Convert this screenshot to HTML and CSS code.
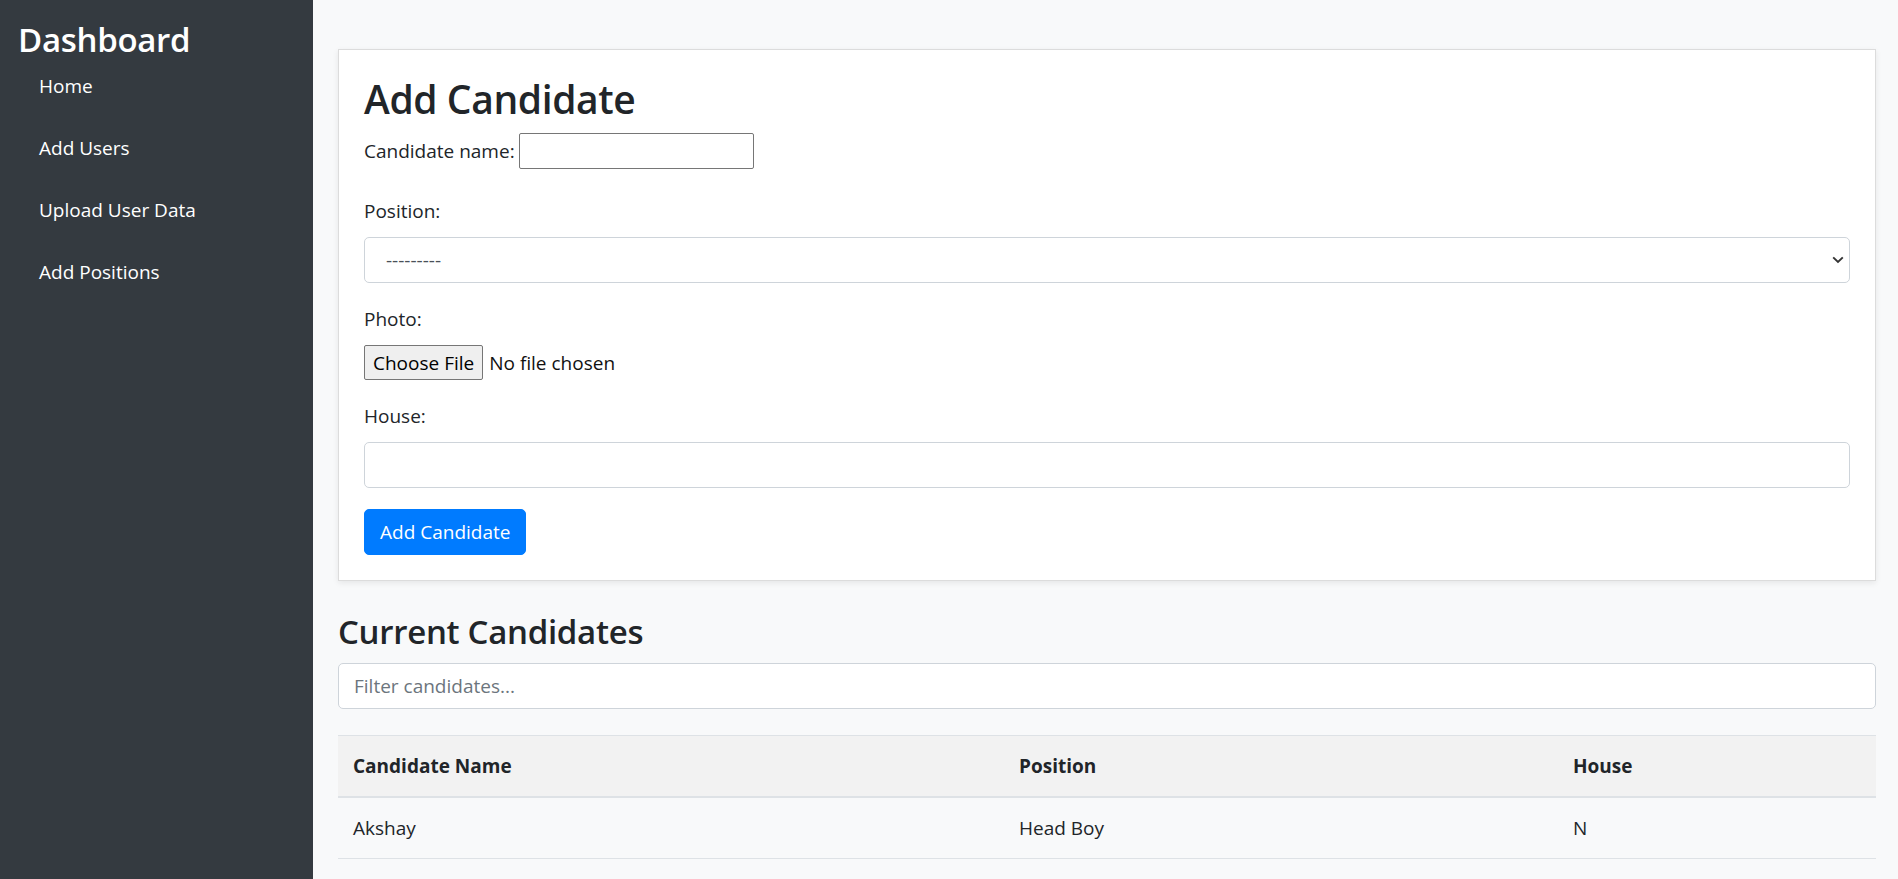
FILE: index.html
```html
<!DOCTYPE html>
<html lang="en">
<head>
<meta charset="utf-8">
<title>Dashboard - Add Candidate</title>
<link rel="stylesheet" href="styles.css">
</head>
<body>
<div class="layout">
  <aside class="sidebar">
    <h2 class="brand">Dashboard</h2>
    <ul class="nav">
      <li><a href="#">Home</a></li>
      <li><a href="#">Add Users</a></li>
      <li><a href="#">Upload User Data</a></li>
      <li><a href="#">Add Positions</a></li>
    </ul>
  </aside>
  <main class="main">
    <section class="card">
      <h1 class="card-title">Add Candidate</h1>
      <form class="form">
        <div class="row-inline">
          <label for="name">Candidate name:</label>
          <input id="name" class="plain-input" type="text">
        </div>
        <label class="field-label" for="position">Position:</label>
        <div class="select-wrap">
          <select id="position" class="control select">
            <option>---------</option>
          </select>
          <svg class="chevron" width="12" height="8" viewBox="0 0 12 8"><path d="M1.2 1.4 L6 6 L10.8 1.4" fill="none" stroke="#333" stroke-width="1.9"/></svg>
        </div>
        <label class="field-label" for="photo">Photo:</label>
        <div class="file-row">
          <button type="button" class="file-btn" id="photo">Choose File</button>
          <span class="file-name">No file chosen</span>
        </div>
        <label class="field-label" for="house">House:</label>
        <input id="house" class="control house" type="text">
        <button type="button" class="btn-primary">Add Candidate</button>
      </form>
    </section>
    <h2 class="section-title">Current Candidates</h2>
    <input class="control filter" type="text" placeholder="Filter candidates...">
    <table class="table">
      <thead>
        <tr>
          <th class="col-name">Candidate Name</th>
          <th class="col-pos">Position</th>
          <th class="col-house">House</th>
        </tr>
      </thead>
      <tbody>
        <tr>
          <td>Akshay</td>
          <td>Head Boy</td>
          <td>N</td>
        </tr>
      </tbody>
    </table>
  </main>
</div>
</body>
</html>
```
FILE: styles.css
```css
* { box-sizing: border-box; }
html, body { margin: 0; padding: 0; }
body {
  font-family: "Open Sans", "Noto Sans", sans-serif;
  font-size: 19px;
  line-height: 30px;
  color: #212529;
  background: #f8f9fa;
}
.layout {
  display: flex;
  min-height: 879px;
}
.sidebar {
  width: 313px;
  flex: 0 0 313px;
  background: #343a40;
  color: #fff;
  padding: 20px 0 0 18px;
}
.brand {
  margin: 0;
  font-size: 33px;
  line-height: 40px;
  font-weight: 600;
  letter-spacing: -0.3px;
}
.nav {
  list-style: none;
  margin: 0;
  padding: 0;
}
.nav li a {
  display: block;
  color: #fff;
  text-decoration: none;
  padding: 11px 0 21px 21px;
  line-height: 30px;
  font-size: 19px;
}
.main {
  flex: 1;
  padding: 49px 22px 0 25px;
}
.card {
  background: #fff;
  border: 1px solid #dcdcdc;
  box-shadow: 0 2px 6px rgba(0,0,0,0.08);
  padding: 25px;
}
.card-title {
  margin: 0 0 10px;
  font-size: 39px;
  line-height: 48px;
  font-weight: 600;
  letter-spacing: -0.4px;
}
.form {
  display: flex;
  flex-direction: column;
  align-items: flex-start;
}
.row-inline {
  display: flex;
  align-items: center;
  gap: 4px;
  height: 36px;
  margin-bottom: 27px;
}
.plain-input {
  width: 235px;
  height: 36px;
  border: 1px solid #767676;
  border-radius: 2px;
  font: inherit;
  padding: 0 4px;
}
.field-label {
  display: block;
  margin-bottom: 11px;
}
.control {
  width: 100%;
  height: 46px;
  border: 1px solid #ced4da;
  border-radius: 5px;
  background: #fff;
  font: inherit;
  color: #495057;
  padding: 0 15px;
}
.select-wrap {
  position: relative;
  width: 100%;
  margin-bottom: 21px;
}
.select {
  appearance: none;
  -webkit-appearance: none;
  padding-left: 21px;
  display: block;
}
.chevron {
  position: absolute;
  right: 6px;
  top: 19px;
}
.file-row {
  display: flex;
  align-items: center;
  gap: 6px;
  height: 35px;
  margin-bottom: 21px;
}
.file-btn {
  height: 35px;
  padding: 0 8px;
  background: #efefef;
  border: 1px solid #767676;
  border-radius: 2px;
  font: inherit;
  color: #000;
}
.file-name { color: #111; }
.house { margin-bottom: 21px; }
.btn-primary {
  height: 46px;
  padding: 0 15px;
  background: #007bff;
  color: #fff;
  border: 1px solid #007bff;
  border-radius: 5px;
  font: inherit;
}
.section-title {
  margin: 30px 0 10px;
  font-size: 33px;
  line-height: 42px;
  font-weight: 600;
  letter-spacing: -0.3px;
}
.filter {
  display: block;
  background: #fff;
}
.filter::placeholder { color: #6c757d; }
.table {
  width: 100%;
  margin-top: 26px;
  border-collapse: collapse;
}
.table th, .table td {
  text-align: left;
  padding: 15px 15px;
  line-height: 30px;
}
.table th {
  background: #f2f2f2;
  font-weight: 700;
  border-top: 1px solid #dee2e6;
  border-bottom: 2px solid #dee2e6;
}
.table td {
  border-bottom: 1px solid #dee2e6;
}
.col-name { width: 666px; }
.col-pos { width: 554px; }
```
